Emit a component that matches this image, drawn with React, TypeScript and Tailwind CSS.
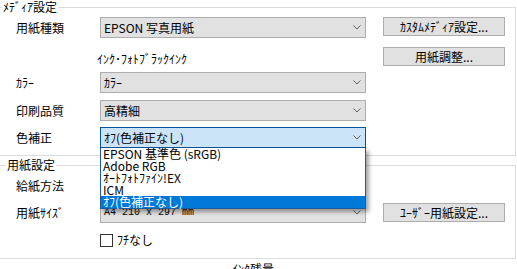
import React from "react";

function Chevron() {
  return (
    <svg width="8" height="5" viewBox="0 0 8 5" className="shrink-0">
      <path d="M0.5 0.5 L4 4 L7.5 0.5" fill="none" stroke="#606060" strokeWidth="1" />
    </svg>
  );
}

function Select({ text, focused, mono }: { text: string; focused?: boolean; mono?: boolean }) {
  return (
    <div
      className={
        focused
          ? "flex h-[21px] w-[266px] items-center justify-between border border-[#005499] bg-[#cce4f7] pl-[3px] pr-[4px]"
          : "flex h-[21px] w-[266px] items-center justify-between border border-[#adadad] bg-[#e1e1e1] pl-[3px] pr-[4px]"
      }
    >
      <span
        className={
          mono
            ? "font-['Liberation_Mono',monospace] text-[10px] leading-[14px] pt-[1px]"
            : "text-[12px] leading-[14px]"
        }
      >
        {text}
      </span>
      <Chevron />
    </div>
  );
}

function Button({ text }: { text: string }) {
  return (
    <div className="ml-[17px] flex h-[19px] w-[122px] items-center justify-center border border-[#adadad] bg-[#e1e1e1] text-[12px] leading-[14px]">
      {text}
    </div>
  );
}

function Label({ text }: { text: string }) {
  return <div className="w-[100px] shrink-0 pl-[16px] text-[12px] leading-[14px]">{text}</div>;
}

export default function App() {
  return (
    <div className="relative h-[269px] w-[517px] overflow-hidden bg-white font-['Noto_Sans_CJK_JP',sans-serif] text-black">
      {/* Group 1 */}
      <div className="relative mt-[7px] -ml-px h-[149px] w-[517px] border border-[#dcdcdc]">
        <div className="absolute left-[2px] top-[-8px] bg-white px-[1px] text-[12px] leading-[14px]">ﾒﾃﾞｨｱ設定</div>

        <div className="mt-[9px] flex items-start">
          <div className="flex h-[21px] items-center">
            <Label text="用紙種類" />
          </div>
          <Select text="EPSON 写真用紙" />
          <Button text="ｶｽﾀﾑﾒﾃﾞｨｱ設定..." />
        </div>

        <div className="mt-[9px] flex h-[19px] items-start">
          <div className="mt-[5px] w-[383px] shrink-0 pl-[97px] text-[12px] leading-[14px]">ｲﾝｸ･ﾌｫﾄﾌﾞﾗｯｸｲﾝｸ</div>
          <div className="-ml-[17px]">
            <Button text="用紙調整..." />
          </div>
        </div>

        <div className="mt-[6px] flex items-center">
          <Label text="ｶﾗｰ" />
          <Select text="ｶﾗｰ" />
        </div>

        <div className="mt-[7px] flex items-center">
          <Label text="印刷品質" />
          <Select text="高精細" />
        </div>

        <div className="mt-[6px] flex items-center">
          <Label text="色補正" />
          <Select text="ｵﾌ(色補正なし)" focused />
        </div>
      </div>

      {/* Group 2 */}
      <div className="relative mt-[9px] -ml-px h-[94px] w-[517px] border border-[#dcdcdc]">
        <div className="absolute left-[6px] top-[-8px] bg-white px-[1px] text-[12px] leading-[14px]">用紙設定</div>

        <div className="mt-[9px] flex items-center">
          <Label text="給紙方法" />
          <Select text="" />
        </div>

        <div className="mt-[6px] flex items-start">
          <div className="flex h-[21px] items-center">
            <Label text="用紙ｻｲｽﾞ" />
          </div>
          <Select text="A4 210 x 297 mm" mono />
          <div className="mt-px">
            <Button text="ﾕｰｻﾞｰ用紙設定..." />
          </div>
        </div>

        <div className="mt-[10px] flex items-center pl-[100px]">
          <div className="h-[13px] w-[13px] border border-[#333333] bg-white" />
          <span className="ml-[4px] text-[12px] leading-[14px]">ﾌﾁなし</span>
        </div>
      </div>

      <div className="mt-[3px] pl-[232px] text-[12px] leading-[14px]">ｲﾝｸ残量</div>

      {/* Dropdown list */}
      <div className="absolute left-[100px] top-[148px] z-10 w-[266px] border-x border-b border-[#1c5c9c] bg-white shadow-[3px_3px_4px_rgba(0,0,0,0.35)]">
        <div className="h-[12px] pl-[2px] text-[12px] leading-[12px]">EPSON 基準色 (sRGB)</div>
        <div className="h-[12px] pl-[2px] text-[12px] leading-[12px]">Adobe RGB</div>
        <div className="h-[12px] pl-[2px] text-[12px] leading-[12px]">ｵｰﾄﾌｫﾄﾌｧｲﾝ!EX</div>
        <div className="h-[12px] pl-[2px] text-[12px] leading-[12px]">ICM</div>
        <div className="h-[12px] bg-[#0078d7] pl-[2px] text-[12px] leading-[12px] text-white">ｵﾌ(色補正なし)</div>
      </div>
    </div>
  );
}
